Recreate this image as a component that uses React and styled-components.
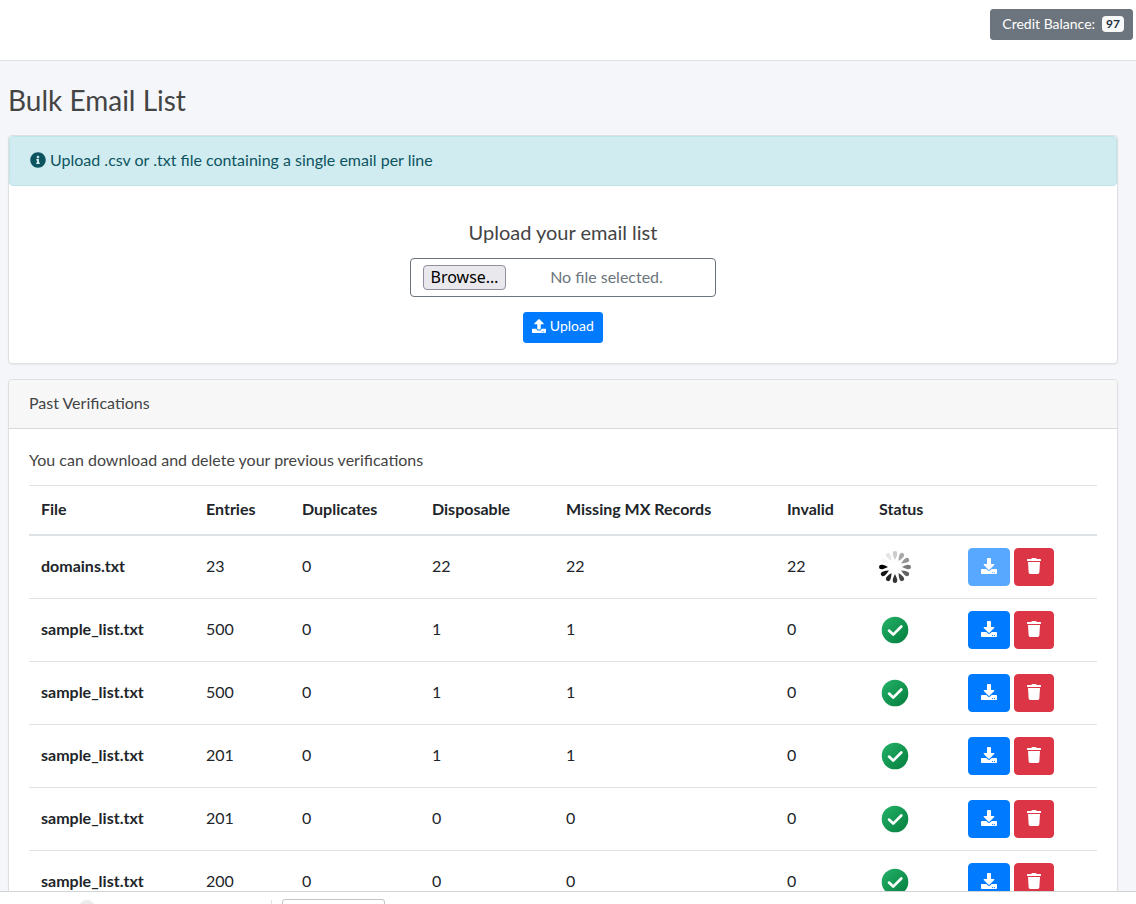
import React from 'react'
import styled, { createGlobalStyle } from 'styled-components'
import { FaDownload, FaInfoCircle, FaTrash, FaUpload } from 'react-icons/fa'

const GlobalStyle = createGlobalStyle`
  *, *::before, *::after {
    box-sizing: border-box;
  }

  body {
    margin: 0;
    background: #f4f6f9;
    color: #444;
    font-family: Lato, 'Liberation Sans', sans-serif;
    font-size: 16px;
    line-height: 24px;
  }

  button, input {
    font-family: inherit;
  }
`

const Page = styled.div`
  display: flex;
  flex-direction: column;
  height: 100vh;
`

const Navbar = styled.header`
  display: flex;
  flex: none;
  justify-content: flex-end;
  align-items: flex-start;
  height: 61px;
  padding: 9px 3px;
  background: #fff;
  border-bottom: 1px solid #dee2e6;
`

const Button = styled.button`
  display: inline-flex;
  align-items: center;
  justify-content: center;
  height: ${props => (props.$small ? '31px' : '38px')};
  padding: ${props => (props.$small ? '0 8px 4px' : '0 12px 2px')};
  border: 1px solid ${props => props.$color};
  border-radius: ${props => (props.$small ? '3px' : '4px')};
  background: ${props => props.$color};
  color: #fff;
  font-size: ${props => (props.$small ? '14px' : '16px')};
  line-height: 21px;
  cursor: pointer;

  &:disabled {
    opacity: 0.65;
    cursor: default;
  }
`

const CreditButton = styled(Button)`
  gap: 7px;
  padding: 0 8px 2px 11px;
`

const Badge = styled.span`
  padding: 2px 4px;
  border-radius: 4px;
  background: #f8f9fa;
  color: #1f2d3d;
  font-size: 12px;
  font-weight: 700;
  line-height: 12px;
`

const Content = styled.main`
  flex: 1;
  min-height: 0;
  padding: 20px 18px 0 8px;
  overflow-y: auto;
  scrollbar-width: none;
`

const Title = styled.h1`
  margin: 0 0 16px;
  font-size: 28px;
  font-weight: 400;
  line-height: 38px;
`

const Card = styled.section`
  margin-bottom: 15px;
  border: 1px solid #dedfe1;
  border-radius: 4px;
  background: #fff;
  box-shadow: 0 1px 2px rgba(0, 0, 0, 0.06);
`

const Alert = styled.div`
  display: flex;
  align-items: center;
  gap: 4px;
  margin-bottom: 16px;
  padding: 11px 20px 13px;
  border: 1px solid #bee5eb;
  border-radius: 4px;
  background: #d1ecf1;
  color: #0c5460;
`

const UploadForm = styled.form`
  display: flex;
  flex-direction: column;
  align-items: center;
  padding: 18px 20px 20px;
`

const FormTitle = styled.label`
  margin-bottom: 14px;
  font-size: 20px;
  line-height: 24px;
`

const FilePicker = styled.div`
  position: relative;
  display: flex;
  align-items: center;
  width: 306px;
  max-width: 100%;
  height: 39px;
  margin-bottom: 15px;
  padding: 0 12px;
  border: 1px solid #6c757d;
  border-radius: 4px;
  color: #6c757d;
`

const FileInput = styled.input`
  position: absolute;
  inset: 0;
  width: 100%;
  opacity: 0;
  cursor: pointer;
`

const Browse = styled.span`
  width: 83px;
  border: 1px solid #8f8f9d;
  border-radius: 4px;
  background: #e9e9ed;
  color: #000;
  font-family: 'Noto Sans', sans-serif;
  line-height: 23px;
  text-align: center;
`

const FileName = styled.span`
  flex: 1;
  margin-left: 4px;
  padding-bottom: 2px;
  text-align: center;
`

const CardHeader = styled.div`
  padding: 11px 20px 13px;
  border-bottom: 1px solid #d9dadb;
  border-radius: 4px 4px 0 0;
  background: #f7f7f7;
`

const CardBody = styled.div`
  padding: 19px 20px 20px;
`

const Hint = styled.p`
  margin: 0 0 13px;
`

const Table = styled.table`
  width: 100%;
  border-collapse: collapse;
  color: #212529;
`

const Col = styled.col`
  width: ${props => props.$width}px;
`

const Th = styled.th`
  padding: 11px 12px 13px;
  border-top: 1px solid #dee2e6;
  text-align: left;
  font-weight: 700;

  thead & {
    border-bottom: 2px solid #dee2e6;
  }
`

const Td = styled.td`
  height: 63px;
  padding: 0 12px 2px;
  border-top: 1px solid #dee2e6;
`

const IconTd = styled(Td)`
  padding-bottom: 0;
`

const StatusIcon = styled.svg`
  display: block;
  width: 32px;
  height: 32px;
`

const Actions = styled.div`
  display: flex;
  gap: 4px;
`

const TrashIcon = styled(FaTrash)`
  width: 14px;
  height: 16px;
`

const BottomBar = styled.footer`
  display: flex;
  flex: none;
  align-items: flex-start;
  height: 13px;
  padding-left: 79px;
  border-top: 1px solid #d2d3d5;
  background: #fff;
  overflow: hidden;
`

const BarAvatar = styled.span`
  width: 16px;
  height: 16px;
  margin-top: 8px;
  border-radius: 50%;
  background: #ebebeb;
`

const BarDivider = styled.span`
  width: 1px;
  height: 16px;
  margin: 8px 10px 0 176px;
  background: #e4e4e4;
`

const BarBox = styled.span`
  width: 103px;
  height: 24px;
  margin-top: 7px;
  border: 1px solid #c4c4c4;
  border-radius: 3px;
`

const COLUMNS = [
  { label: 'File', width: 165 },
  { label: 'Entries', width: 96 },
  { label: 'Duplicates', width: 130 },
  { label: 'Disposable', width: 134 },
  { label: 'Missing MX Records', width: 221 },
  { label: 'Invalid', width: 92 },
  { label: 'Status', width: 89 },
  { label: '', width: 141 },
]

const ROWS = [
  { file: 'domains.txt', counts: [23, 0, 22, 22, 22], pending: true },
  { file: 'sample_list.txt', counts: [500, 0, 1, 1, 0] },
  { file: 'sample_list.txt', counts: [500, 0, 1, 1, 0] },
  { file: 'sample_list.txt', counts: [201, 0, 1, 1, 0] },
  { file: 'sample_list.txt', counts: [201, 0, 0, 0, 0] },
  { file: 'sample_list.txt', counts: [200, 0, 0, 0, 0] },
]

// darkest petal points left, the rest fade counterclockwise
const PETALS = [1, 0.92, 0.86, 0.8, 0.72, 0.62, 0.52, 0.42, 0.34, 0.2, 0.1, 0.03]

const Spinner = () => (
  <StatusIcon viewBox="0 0 32 32" role="img" aria-label="In progress">
    {PETALS.map((opacity, i) => (
      <path
        key={opacity}
        d="M9 16 Q6 17.6 3.4 18.2 Q0 18.6 0 16 Q0 13.4 3.4 13.8 Q6 14.4 9 16 Z"
        opacity={opacity}
        transform={`rotate(${-30 * i} 16 16)`}
      />
    ))}
  </StatusIcon>
)

const Check = () => (
  <StatusIcon viewBox="0 0 32 32" role="img" aria-label="Done">
    <defs>
      <linearGradient id="check" x1="0" y1="0" x2="1" y2="1">
        <stop offset="0.1" stopColor="#21ad64" />
        <stop offset="0.9" stopColor="#088242" />
      </linearGradient>
    </defs>
    <circle cx="16" cy="16" r="13.3" fill="url(#check)" />
    <path
      d="M10 16.6 L14.2 20.6 L22.3 12.5"
      fill="none"
      stroke="#fff"
      strokeWidth="2.7"
      strokeLinecap="round"
      strokeLinejoin="round"
    />
  </StatusIcon>
)

const VerificationRow = ({ file, counts, pending }) => (
  <tr>
    <Th scope="row">{file}</Th>
    {counts.map((count, i) => (
      <Td key={i}>{count}</Td>
    ))}
    <IconTd>{pending ? <Spinner /> : <Check />}</IconTd>
    <IconTd>
      <Actions>
        <Button type="button" $color="#007bff" disabled={pending} aria-label="Download">
          <FaDownload />
        </Button>
        <Button type="button" $color="#dc3545" aria-label="Delete">
          <TrashIcon />
        </Button>
      </Actions>
    </IconTd>
  </tr>
)

export default () => (
  <Page>
    <GlobalStyle />
    <Navbar>
      <CreditButton type="button" $small $color="#6c757d">
        Credit Balance: <Badge>97</Badge>
      </CreditButton>
    </Navbar>
    <Content>
      <Title>Bulk Email List</Title>
      <Card>
        <Alert>
          <FaInfoCircle />
          Upload .csv or .txt file containing a single email per line
        </Alert>
        <UploadForm>
          <FormTitle htmlFor="list">Upload your email list</FormTitle>
          <FilePicker>
            <Browse>Browse…</Browse>
            <FileName>No file selected.</FileName>
            <FileInput id="list" type="file" accept=".csv,.txt" />
          </FilePicker>
          <Button type="button" $small $color="#007bff">
            <FaUpload />
            &nbsp;Upload
          </Button>
        </UploadForm>
      </Card>
      <Card>
        <CardHeader>Past Verifications</CardHeader>
        <CardBody>
          <Hint>You can download and delete your previous verifications</Hint>
          <Table>
            <colgroup>
              {COLUMNS.map(({ label, width }) => (
                <Col key={label} $width={width} />
              ))}
            </colgroup>
            <thead>
              <tr>
                {COLUMNS.map(({ label }) =>
                  label ? <Th key={label} scope="col">{label}</Th> : <Th as="td" key="actions" />
                )}
              </tr>
            </thead>
            <tbody>
              {ROWS.map((row, i) => (
                <VerificationRow key={i} {...row} />
              ))}
            </tbody>
          </Table>
        </CardBody>
      </Card>
    </Content>
    <BottomBar>
      <BarAvatar />
      <BarDivider />
      <BarBox />
    </BottomBar>
  </Page>
)
